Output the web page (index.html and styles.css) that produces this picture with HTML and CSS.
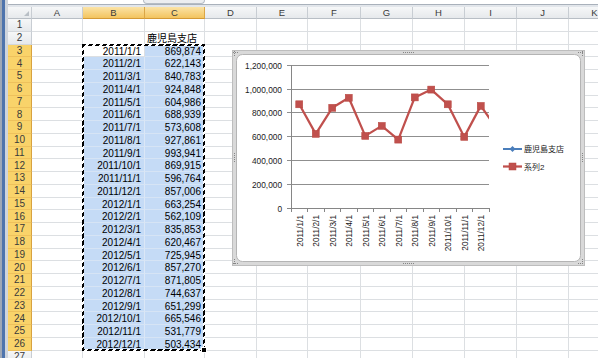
FILE: index.html
```html
<!DOCTYPE html>
<html lang="ja">
<head>
    <meta charset="UTF-8">
    <title>Book1 - Excel</title>
    <link rel="stylesheet" href="styles.css">
</head>
<body>
    <div class="window">
        <div class="side"></div>
        <div class="main">
            <div class="formula-bar"><div class="fx-toggle"></div></div>
            <div class="sheet" id="sheet"></div>
        </div>

        <div class="marquee"></div>
        <div class="fill-handle"></div>

        <svg class="chart" width="353" height="216" viewBox="0 0 353 216">
            <defs>
                <clipPath id="plotClip"><rect x="59" y="0" width="198" height="170"/></clipPath>
            </defs>
            <!-- chart frame -->
            <rect class="frame" x="0.5" y="0.5" width="352" height="215"/>
            <rect class="chart-area" x="4.5" y="4.5" width="344" height="207" rx="6"/>
            <g class="handles">
                <path d="M171 2.5h12M171 213.5h12M2.5 103v10M350.5 103v10"/>
                <path d="M1 2.5h6M2.5 1v6M346 2.5h6M350.5 1v6M1 213.5h6M2.5 209v6M346 213.5h6M350.5 209v6"/>
            </g>

            <!-- gridlines -->
            <g class="grid">
                <path d="M55 15.5H257M55 39.5H257M55 62.5H257M55 86.5H257M55 110.5H257M55 134.5H257"/>
            </g>
            <g class="axis">
                <path d="M59.5 15V158.5M55 158.5H257.5"/>
                <path d="M59.5 158v4M75.5 158v4M92.5 158v4M108.5 158v4M125.5 158v4M141.5 158v4M158.5 158v4M174.5 158v4M191.5 158v4M207.5 158v4M224.5 158v4M240.5 158v4M257.5 158v4"/>
            </g>

            <!-- value axis -->
            <g class="ylabels">
                <text x="50" y="18.5">1,200,000</text>
                <text x="50" y="42.5">1,000,000</text>
                <text x="50" y="65.5">800,000</text>
                <text x="50" y="89.5">600,000</text>
                <text x="50" y="113.5">400,000</text>
                <text x="50" y="137.5">200,000</text>
                <text x="50" y="161.5">0</text>
            </g>

            <!-- category axis -->
            <g class="xlabels">
                <text transform="translate(70.5,165) rotate(-90)">2011/1/1</text>
                <text transform="translate(87,165) rotate(-90)">2011/2/1</text>
                <text transform="translate(103.5,165) rotate(-90)">2011/3/1</text>
                <text transform="translate(120,165) rotate(-90)">2011/4/1</text>
                <text transform="translate(136.5,165) rotate(-90)">2011/5/1</text>
                <text transform="translate(153,165) rotate(-90)">2011/6/1</text>
                <text transform="translate(169.5,165) rotate(-90)">2011/7/1</text>
                <text transform="translate(186,165) rotate(-90)">2011/8/1</text>
                <text transform="translate(202.5,165) rotate(-90)">2011/9/1</text>
                <text transform="translate(219,165) rotate(-90)">2011/10/1</text>
                <text transform="translate(235.5,165) rotate(-90)">2011/11/1</text>
                <text transform="translate(252,165) rotate(-90)">2011/12/1</text>
            </g>

            <!-- series 2 -->
            <g clip-path="url(#plotClip)">
                <polyline class="series" points="67.25,54.3 83.75,83.9 100.25,57.8 116.75,47.8 133.25,85.9 149.75,75.9 166.25,89.6 182.75,47.4 199.25,39.6 215.75,54.3 232.25,86.9 248.75,55.9 265.25,79"/>
                <g class="marker">
                    <rect x="63.75" y="50.8" width="7" height="7"/>
                    <rect x="80.25" y="80.4" width="7" height="7"/>
                    <rect x="96.75" y="54.3" width="7" height="7"/>
                    <rect x="113.25" y="44.3" width="7" height="7"/>
                    <rect x="129.75" y="82.4" width="7" height="7"/>
                    <rect x="146.25" y="72.4" width="7" height="7"/>
                    <rect x="162.75" y="86.1" width="7" height="7"/>
                    <rect x="179.25" y="43.9" width="7" height="7"/>
                    <rect x="195.75" y="36.1" width="7" height="7"/>
                    <rect x="212.25" y="50.8" width="7" height="7"/>
                    <rect x="228.75" y="83.4" width="7" height="7"/>
                    <rect x="245.25" y="52.4" width="7" height="7"/>
                </g>
            </g>

            <!-- legend -->
            <g class="legend">
                <path class="key-blue" d="M271 99H290"/>
                <polygon class="diamond" points="280.5,96 283.5,99 280.5,102 277.5,99"/>
                <text x="292" y="102">鹿児島支店</text>
                <path class="key-red" d="M271 116.5H290"/>
                <rect class="marker" x="277" y="113" width="7" height="7"/>
                <text x="292" y="120">系列2</text>
            </g>
        </svg>
    </div>

    <script>
        const sheet = document.getElementById('sheet');
        const cols = ['A', 'B', 'C', 'D', 'E', 'F', 'G', 'H', 'I', 'J', 'K'];
        const values = [869874, 622143, 840783, 924848, 604986, 688939, 573608, 927861, 993941, 869915, 596764, 857006,
                        663254, 562109, 835853, 620467, 725945, 857270, 871805, 744637, 651299, 665546, 531779, 503434];
        const dates = [];
        [2011, 2012].forEach(y => {
            for (let m = 1; m <= 12; m++) dates.push(y + '/' + m + '/1');
        });

        function addCell(cls, text) {
            const div = document.createElement('div');
            div.className = cls;
            if (text !== undefined) div.textContent = text;
            sheet.appendChild(div);
        }

        function fmt(n) {
            return String(n).replace(/\B(?=(\d{3})+(?!\d))/g, ',');
        }

        addCell('hd corner');
        cols.forEach((c, i) => addCell(i === 1 || i === 2 ? 'hd on' : 'hd', c));

        for (let r = 1; r <= 27; r++) {
            const inRange = r >= 3 && r <= 26;
            addCell(inRange ? 'hd rh on' : 'hd rh', r);
            cols.forEach((c, i) => {
                let cls = 'cell';
                let text;
                if (r === 2 && i === 2) text = '鹿児島支店';
                if (inRange && i === 1) {
                    cls += r === 3 ? ' num active' : ' num sel';
                    text = dates[r - 3];
                }
                if (inRange && i === 2) {
                    cls += ' num sel';
                    text = fmt(values[r - 3]);
                }
                addCell(cls, text);
            });
        }
    </script>
</body>
</html>
```

FILE: styles.css
```css
body {
    margin: 0;
    background: #fff;
    font-family: "Liberation Sans", "Noto Sans CJK JP", sans-serif;
    color: #000;
}
.window {
    position: relative;
    display: flex;
    width: 598px;
    height: 358px;
    overflow: hidden;
}
.side {
    flex: none;
    width: 8px;
    background: linear-gradient(to right, #9ea8b6 0 2px, #4e74ad 2px 5px, #cfd5dd 5px 8px);
}
.main {
    flex: 1;
    display: flex;
    flex-direction: column;
    background: #e2e6eb;
}
.formula-bar {
    display: flex;
    height: 4px;
    margin-bottom: 2px;
    background: #fff;
    border-bottom: 1px solid #a9b1bb;
}
.fx-toggle {
    width: 60px;
    height: 3px;
    margin-left: 135px;
    background: #eceef1;
    border: 1px solid #b5bcc5;
    border-top: none;
    border-radius: 0 0 4px 4px;
}
.sheet {
    display: grid;
    grid-template-columns: 24px 51px 62px 60px 52px 51px 53px 52px 52px 52px 52px 52px;
    grid-template-rows: 12px;
    grid-auto-rows: 12.75px;
    background: #fff;
}
.hd {
    box-sizing: border-box;
    display: flex;
    align-items: center;
    justify-content: center;
    background: linear-gradient(#f6f7f8, #e6e9ec);
    border-right: 1px solid #c8cdd3;
    border-bottom: 1px solid #b8bec5;
    font-size: 9.5px;
    color: #3a3a3a;
}
.hd.on {
    background: linear-gradient(#fbe3a6, #f3c45e);
    border-right-color: #dba646;
    border-bottom-color: #d49a35;
}
.rh {
    font-size: 10px;
    border-bottom-color: #d3d7dc;
}
.rh.on {
    background: #f9d36a;
    border-right-color: #d8a240;
    border-bottom-color: #eec15c;
}
.corner {
    position: relative;
}
.corner::after {
    content: "";
    position: absolute;
    right: 2px;
    bottom: 2px;
    border-left: 5px solid transparent;
    border-bottom: 5px solid #b9bfc6;
}
.cell {
    box-sizing: border-box;
    padding: 1px 2px 0;
    border-right: 1px solid #dcdfe2;
    border-bottom: 1px solid #dcdfe2;
    font-size: 10px;
    line-height: 11px;
    white-space: nowrap;
}
.cell.num {
    text-align: right;
    padding-right: 3px;
}
.cell.sel {
    background: #c5dbf6;
    border-right-color: #dbe7f6;
    border-bottom-color: #d6e4f5;
}
.cell.active {
    background: #fff;
}
.marquee {
    position: absolute;
    left: 82px;
    top: 44px;
    width: 123px;
    height: 307px;
    box-sizing: border-box;
    border: 2px solid #000;
    border-image: repeating-linear-gradient(135deg, #000 0 3px, #fff 3px 5px) 2;
}
.fill-handle {
    position: absolute;
    left: 201px;
    top: 347px;
    width: 4px;
    height: 4px;
    background: #000;
    border: 1px solid #fff;
}
.chart {
    position: absolute;
    left: 232px;
    top: 50px;
    font-family: "Liberation Sans", "Noto Sans CJK JP", sans-serif;
}
.frame {
    fill: #d9d9d9;
    stroke: #bdbdbd;
}
.chart-area {
    fill: #fff;
    stroke: #b4b4b4;
}
.handles path {
    fill: none;
    stroke: #858585;
    stroke-width: 1;
    stroke-dasharray: 1 1;
}
.grid path {
    fill: none;
    stroke: #8f8f8f;
}
.axis path {
    fill: none;
    stroke: #868686;
}
.ylabels text {
    font-size: 8.3px;
    text-anchor: end;
    fill: #1a1a1a;
}
.xlabels text {
    font-size: 8.3px;
    text-anchor: end;
    fill: #1a1a1a;
}
.series {
    fill: none;
    stroke: #c0504d;
    stroke-width: 2.25;
    stroke-linejoin: round;
}
.marker rect, rect.marker {
    fill: #c0504d;
    stroke: #b8463f;
    stroke-width: 0.5;
}
.legend text {
    font-size: 8px;
    fill: #1a1a1a;
}
.key-blue {
    stroke: #4a7ebb;
    stroke-width: 2;
}
.diamond {
    fill: #4a7ebb;
}
.key-red {
    stroke: #c0504d;
    stroke-width: 2.25;
}
```
